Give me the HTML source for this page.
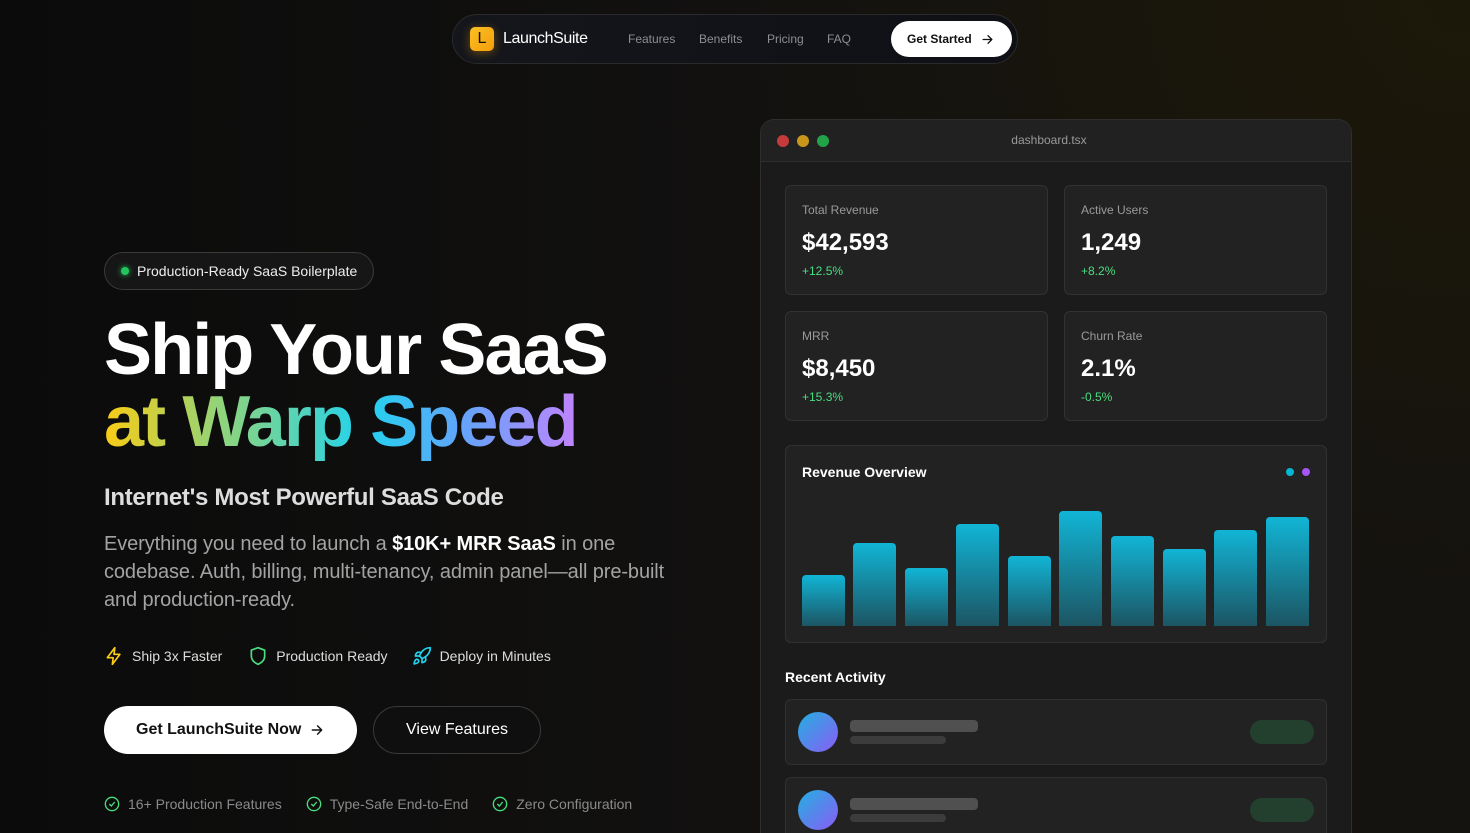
<!DOCTYPE html>
<html style="overflow:hidden;width:1470px;height:833px"><head><meta charset="utf-8"><style>
*{margin:0;padding:0;box-sizing:border-box}
body{width:1470px;height:833px;overflow:hidden;font-family:"Liberation Sans",sans-serif;color:#fff;
background:radial-gradient(ellipse 1000px 800px at 1470px 0,#1c1809 0%,rgba(20,18,10,0) 75%),linear-gradient(90deg,#0b0b0b 0%,#121110 50%,#15130f 100%);position:relative}
.a{position:absolute}
.nav{left:452px;top:14px;width:566px;height:50px;border-radius:25px;border:1px solid #2a2a2a;background:linear-gradient(90deg,#14161c,#0e1016)}
.logo{left:17px;top:12px;width:24px;height:24px;border-radius:5px;background:linear-gradient(135deg,#fbbf24,#f59e0b);color:#111;font-size:16px;text-align:center;line-height:24px;box-shadow:0 2px 10px rgba(245,158,11,.4)}
.nl{font-size:12px;color:#8d8d93;top:17px}
.gs{left:438px;top:6px;width:121px;height:36px;border-radius:18px;background:#fff;color:#111;font-size:12px;font-weight:bold;line-height:36px;padding-left:16px}
.badge{left:104px;top:252px;width:270px;height:38px;border-radius:19px;border:1px solid #3a3a3a;background:#161616;font-size:14px;line-height:36px;padding-left:32px;color:#eee}
.h1{left:104px;font-size:72px;font-weight:bold;letter-spacing:-1.9px;line-height:72px}
.grad{background:linear-gradient(90deg,#facc15 0%,#8fd47c 25%,#22d3ee 55%,#60a5fa 75%,#c084fc 100%);-webkit-background-clip:text;background-clip:text;color:transparent}
.win{left:760px;top:119px;width:592px;height:714px;border-radius:14px 14px 0 0;border:1px solid #2e2e2e;border-bottom:none;background:#1b1b1b;overflow:hidden}
.bar{position:absolute;top:0;left:0;right:0;height:42px;background:#212121;border-bottom:1px solid #2e2e2e}
.dot{position:absolute;top:15px;width:12px;height:12px;border-radius:6px}
.card{position:absolute;width:263px;height:110px;border:1px solid #323232;border-radius:6px;background:#222;padding:17px 16px}
.card .l{font-size:12px;color:#9a9a9a}
.card .v{font-size:24px;font-weight:bold;margin-top:12px}
.card .g{font-size:12px;color:#4ade80;margin-top:7px}
.b{position:absolute;bottom:16px;width:43px;border-radius:4px 4px 0 0;background:linear-gradient(#11b5d6,#1c5563)}
.act{position:absolute;left:24px;width:542px;height:66px;border:1px solid #303030;border-radius:6px;background:#222}
.av{position:absolute;left:12px;top:12px;width:40px;height:40px;border-radius:20px;background:linear-gradient(135deg,#22b0e0,#8b5cf6)}
</style></head><body>
<div class="a nav">
<div class="a logo">L</div>
<div class="a" style="left:50px;top:15px;font-size:16px;letter-spacing:-.4px">LaunchSuite</div>
<div class="a nl" style="left:175px">Features</div>
<div class="a nl" style="left:246px">Benefits</div>
<div class="a nl" style="left:314px">Pricing</div>
<div class="a nl" style="left:374px">FAQ</div>
<div class="a gs">Get Started <svg style="position:absolute;left:90px;top:12px" width="13" height="13" viewBox="0 0 24 24" fill="none" stroke="#111" stroke-width="2.5" stroke-linecap="round" stroke-linejoin="round"><path d="M4 12h16M13 5l7 7-7 7"/></svg></div>
</div>

<div class="a badge"><span class="a" style="left:16px;top:14px;width:8px;height:8px;border-radius:4px;background:#22c55e;box-shadow:0 0 6px #22c55e"></span>Production-Ready SaaS Boilerplate</div>
<div class="a h1" style="top:314px">Ship Your SaaS</div>
<div class="a h1" style="top:386px"><span class="grad">at Warp Speed</span></div>
<div class="a" style="left:104px;top:484px;font-size:24px;font-weight:bold;color:#ddd;letter-spacing:-.3px">Internet's Most Powerful SaaS Code</div>
<div class="a" style="left:104px;top:530px;width:590px;font-size:20px;line-height:28px;color:#a3a3a3;letter-spacing:-.1px">Everything you need to launch a <b style="color:#fff">$10K+ MRR SaaS</b> in one codebase. Auth, billing, multi-tenancy, admin panel—all pre-built and production-ready.</div>

<div class="a" style="left:104px;top:646px;font-size:14px;color:#ddd;display:flex;align-items:center;height:20px">
<svg width="20" height="20" viewBox="0 0 24 24" fill="none" stroke="#facc15" stroke-width="2" stroke-linejoin="round"><path d="M13 2L4 14h7l-1 8 9-12h-7z"/></svg><span style="margin:0 26px 0 8px">Ship 3x Faster</span>
<svg width="20" height="20" viewBox="0 0 24 24" fill="none" stroke="#4ade80" stroke-width="2" stroke-linejoin="round"><path d="M12 2l8 3v7c0 5-3.5 8-8 10-4.5-2-8-5-8-10V5z"/></svg><span style="margin:0 24px 0 8px">Production Ready</span>
<svg width="20" height="20" viewBox="0 0 24 24" fill="none" stroke="#22d3ee" stroke-width="2" stroke-linecap="round" stroke-linejoin="round"><path d="M4.5 16.5c-1.5 1.3-2 5-2 5s3.7-.5 5-2c.7-.8.7-2.1-.1-2.9a2.2 2.2 0 0 0-2.9-.1z"/><path d="M12 15l-3-3a22 22 0 0 1 2-4A13 13 0 0 1 22 2c0 2.7-.8 7.5-6 11a22 22 0 0 1-4 2z"/><path d="M9 12H4s.6-3 2-4c1.6-1.1 5 0 5 0M12 15v5s3-.6 4-2c1.1-1.6 0-5 0-5"/></svg><span style="margin-left:8px">Deploy in Minutes</span>
</div>

<div class="a" style="left:104px;top:706px;width:253px;height:48px;border-radius:24px;background:#fff;color:#111;font-size:16px;font-weight:bold;line-height:48px;padding-left:32px">Get LaunchSuite Now <svg style="position:absolute;left:206px;top:17px" width="14" height="14" viewBox="0 0 24 24" fill="none" stroke="#111" stroke-width="2.5" stroke-linecap="round" stroke-linejoin="round"><path d="M4 12h16M13 5l7 7-7 7"/></svg></div>
<div class="a" style="left:373px;top:706px;width:168px;height:48px;border-radius:24px;border:1px solid #3a3a3a;background:#0f0f0f;font-size:16px;line-height:46px;text-align:center">View Features</div>

<div class="a" style="left:104px;top:795px;font-size:14px;color:#8a8a8a;display:flex;align-items:center;height:18px">
<svg width="16" height="16" viewBox="0 0 24 24" fill="none" stroke="#4ade80" stroke-width="2"><circle cx="12" cy="12" r="10"/><path d="M8 12l3 3 5-6"/></svg><span style="margin:0 24px 0 8px">16+ Production Features</span>
<svg width="16" height="16" viewBox="0 0 24 24" fill="none" stroke="#4ade80" stroke-width="2"><circle cx="12" cy="12" r="10"/><path d="M8 12l3 3 5-6"/></svg><span style="margin:0 24px 0 8px">Type-Safe End-to-End</span>
<svg width="16" height="16" viewBox="0 0 24 24" fill="none" stroke="#4ade80" stroke-width="2"><circle cx="12" cy="12" r="10"/><path d="M8 12l3 3 5-6"/></svg><span style="margin-left:8px">Zero Configuration</span>
</div>

<div class="a win">
<div class="bar"><div class="dot" style="left:16px;background:#c53a3a"></div><div class="dot" style="left:36px;background:#c9961a"></div><div class="dot" style="left:56px;background:#22a34a"></div>
<div style="position:absolute;left:0;right:14px;top:13px;text-align:center;font-size:12px;color:#9a9a9a">dashboard.tsx</div></div>
<div class="card" style="left:24px;top:65px"><div class="l">Total Revenue</div><div class="v">$42,593</div><div class="g">+12.5%</div></div>
<div class="card" style="left:303px;top:65px"><div class="l">Active Users</div><div class="v">1,249</div><div class="g">+8.2%</div></div>
<div class="card" style="left:24px;top:191px"><div class="l">MRR</div><div class="v">$8,450</div><div class="g">+15.3%</div></div>
<div class="card" style="left:303px;top:191px"><div class="l">Churn Rate</div><div class="v">2.1%</div><div class="g">-0.5%</div></div>
<div style="position:absolute;left:24px;top:325px;width:542px;height:198px;border:1px solid #323232;border-radius:6px;background:#222">
<div style="position:absolute;left:16px;top:18px;font-size:14px;font-weight:bold">Revenue Overview</div>
<div style="position:absolute;right:32px;top:22px;width:8px;height:8px;border-radius:4px;background:#06b6d4"></div>
<div style="position:absolute;right:16px;top:22px;width:8px;height:8px;border-radius:4px;background:#a855f7"></div>
<div class="b" style="left:16px;height:51px"></div>
<div class="b" style="left:67px;height:83px"></div>
<div class="b" style="left:119px;height:58px"></div>
<div class="b" style="left:170px;height:102px"></div>
<div class="b" style="left:222px;height:70px"></div>
<div class="b" style="left:273px;height:115px"></div>
<div class="b" style="left:325px;height:90px"></div>
<div class="b" style="left:377px;height:77px"></div>
<div class="b" style="left:428px;height:96px"></div>
<div class="b" style="left:480px;height:109px"></div>
</div>
<div style="position:absolute;left:24px;top:549px;font-size:14px;font-weight:bold">Recent Activity</div>
<div class="act" style="top:579px"><div class="av"></div><div class="a" style="left:64px;top:20px;width:128px;height:12px;border-radius:4px;background:#505050"></div><div class="a" style="left:64px;top:36px;width:96px;height:8px;border-radius:4px;background:#3c3c3c"></div><div class="a" style="right:12px;top:20px;width:64px;height:24px;border-radius:12px;background:#23402e"></div></div>
<div class="act" style="top:657px"><div class="av"></div><div class="a" style="left:64px;top:20px;width:128px;height:12px;border-radius:4px;background:#505050"></div><div class="a" style="left:64px;top:36px;width:96px;height:8px;border-radius:4px;background:#3c3c3c"></div><div class="a" style="right:12px;top:20px;width:64px;height:24px;border-radius:12px;background:#23402e"></div></div>
</div>
</body></html>
